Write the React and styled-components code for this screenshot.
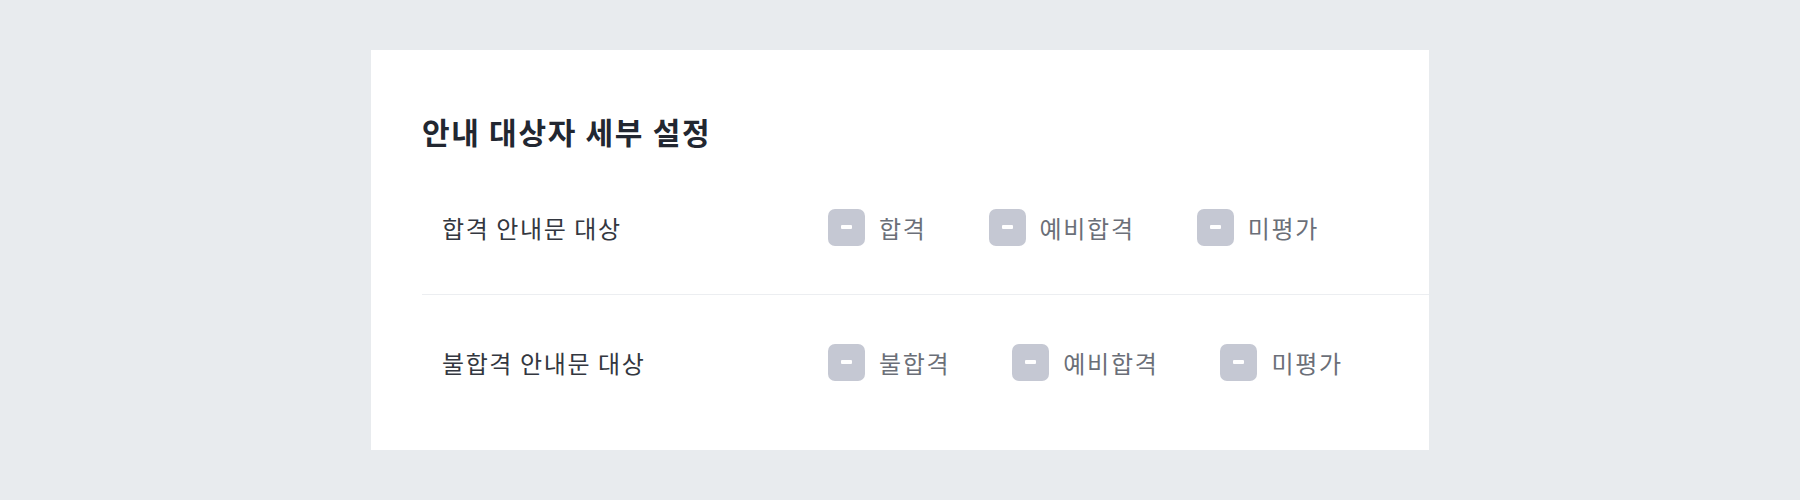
import React from "react";
import styled, { createGlobalStyle } from "styled-components";

const Global = createGlobalStyle`
  html, body { margin: 0; padding: 0; background: #e8ebee; }
  body { font-family: "Noto Sans CJK KR", "Noto Sans", sans-serif; }
`;

const Page = styled.div`
  padding-top: 50px;
  display: flex;
  justify-content: center;
`;

const Card = styled.section`
  width: 1058px;
  background: #ffffff;
  padding: 61px 0 21px 51px;
  box-sizing: border-box;
`;

const Title = styled.h2`
  margin: 0 0 9px;
  font-size: 30px;
  line-height: 40px;
  letter-spacing: 1.7px;
  font-weight: 700;
  color: #222731;
`;

const Row = styled.div`
  display: flex;
  align-items: center;
  height: 134px;
  padding-left: 20px;
  border-bottom: ${(p) => (p.$divider ? "1px solid #eceef1" : "none")};
`;

const Label = styled.div`
  width: 386px;
  flex-shrink: 0;
  font-size: 24px;
  letter-spacing: 1.6px;
  color: #333740;
`;

const Options = styled.div`
  display: flex;
  align-items: center;
  gap: 62px;
`;

const Option = styled.label`
  display: flex;
  align-items: center;
  gap: 14px;
  font-size: 24px;
  letter-spacing: 1.7px;
  color: #6b6f78;
`;

const Box = styled.span`
  width: 37px;
  height: 37px;
  border-radius: 7px;
  background: #c5c8d3;
  display: flex;
  align-items: center;
  justify-content: center;
  &::after {
    content: "";
    width: 11px;
    height: 4px;
    border-radius: 1px;
    background: #ffffff;
  }
`;

const rows = [
  { label: "합격 안내문 대상", options: ["합격", "예비합격", "미평가"] },
  { label: "불합격 안내문 대상", options: ["불합격", "예비합격", "미평가"] },
];

export default function App() {
  return (
    <>
      <Global />
      <Page>
        <Card>
          <Title>안내 대상자 세부 설정</Title>
          {rows.map((r, i) => (
            <Row key={r.label} $divider={i < rows.length - 1}>
              <Label>{r.label}</Label>
              <Options>
                {r.options.map((o) => (
                  <Option key={o}>
                    <Box />
                    {o}
                  </Option>
                ))}
              </Options>
            </Row>
          ))}
        </Card>
      </Page>
    </>
  );
}
